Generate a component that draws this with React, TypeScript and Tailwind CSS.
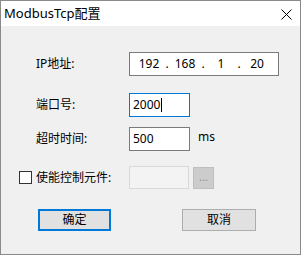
import React from 'react';

const font = { fontFamily: '"Noto Sans", "Noto Sans CJK SC", sans-serif' };

const octets = ['192', '168', '1', '20'];

const Field: React.FC<{ children?: React.ReactNode; focused?: boolean; className?: string }> = ({ children, focused, className }) => (
  <div
    className={`flex items-center bg-white border h-[24px] text-[12px] text-black ${focused ? 'border-[#0078d7]' : 'border-[#7a7a7a]'} ${className ?? ''}`}
  >
    {children}
  </div>
);

const App: React.FC = () => {
  return (
    <div className="w-[301px] h-[255px] border border-[#8a8a8a] bg-[#f0f0f0] flex flex-col text-black" style={font}>
      {/* title bar */}
      <div className="h-[25px] bg-white flex items-center justify-between pl-[3px] pr-[8px] shrink-0">
        <span className="text-[13px] leading-none">ModbusTcp配置</span>
        <svg width="11" height="11" viewBox="0 0 11 11" className="mt-[1px]">
          <path d="M0.5 0.5 L10.5 10.5 M10.5 0.5 L0.5 10.5" stroke="#000" strokeWidth="1" fill="none" />
        </svg>
      </div>

      <div className="flex flex-col text-[12px] pt-[26px]">
        <div className="flex items-center pl-[35px]">
          <span className="w-[93px]">IP地址:</span>
          <Field className="w-[150px] pl-[6px]">
            {octets.map((o, i) => (
              <React.Fragment key={i}>
                {i > 0 && <span className="w-[10px] text-center">.</span>}
                <span className="w-[26px] text-center">{o}</span>
              </React.Fragment>
            ))}
          </Field>
        </div>

        <div className="flex items-center pl-[35px] mt-[17px]">
          <span className="w-[93px]">端口号:</span>
          <Field focused className="w-[61px] pl-[3px]">
            <span>2000</span>
            <span className="w-px h-[14px] bg-black ml-px" />
          </Field>
        </div>

        <div className="flex items-center pl-[35px] mt-[10px]">
          <span className="w-[93px]">超时时间:</span>
          <Field className="w-[61px] pl-[3px]">
            <span>500</span>
          </Field>
          <span className="ml-[8px] mb-[4px]">ms</span>
        </div>

        <div className="flex items-center pl-[18px] mt-[15px]">
          <span className="w-[13px] h-[13px] border border-[#333] bg-white" />
          <span className="w-[97px] pl-[4px]">使能控制元件:</span>
          <div className="w-[60px] h-[23px] border border-[#d9d9d9] bg-[#f3f3f3]" />
          <div className="ml-[4px] w-[21px] h-[22px] border border-[#bfbfbf] bg-[#cccccc] flex items-center justify-center text-[#8c8c8c] text-[11px] leading-none pb-[2px]">
            ...
          </div>
        </div>

        <div className="flex items-center pl-[37px] mt-[20px]">
          <button type="button" className="w-[73px] h-[22px] border-2 border-[#0078d7] bg-[#e1e1e1] text-[12px] leading-none flex items-center justify-center">
            确定
          </button>
          <button type="button" className="ml-[71px] w-[74px] h-[22px] border border-[#adadad] bg-[#e1e1e1] text-[12px] leading-none flex items-center justify-center">
            取消
          </button>
        </div>
      </div>
    </div>
  );
};

export default App;
